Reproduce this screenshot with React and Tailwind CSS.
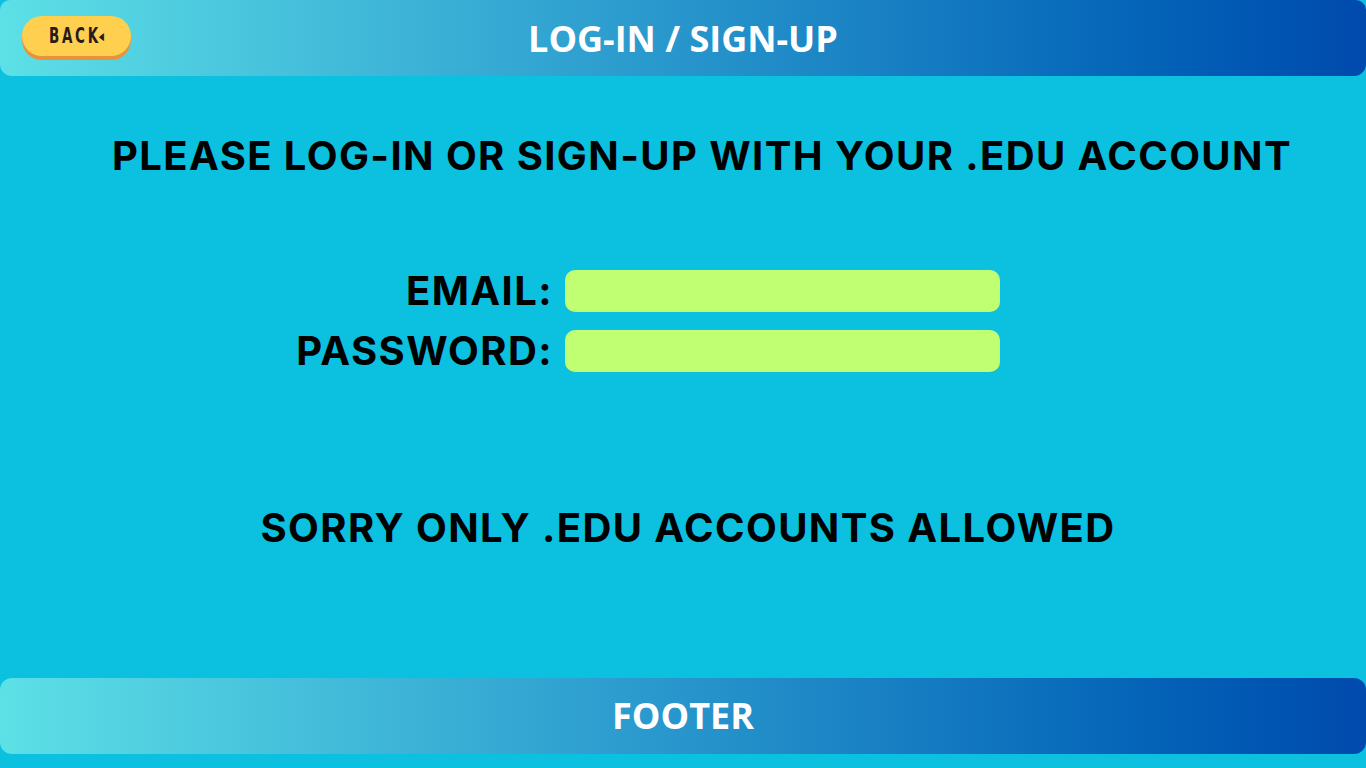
import React from 'react';

const App = () => {
  return (
    <div className="w-[1366px] h-[768px] bg-[#0cc0df] flex flex-col overflow-hidden font-['Inter',sans-serif]">
      {/* Header bar */}
      <div className="relative h-[76px] shrink-0 rounded-b-[12px] rounded-t-[10px] bg-gradient-to-r from-[#5de0e6] to-[#004aad] flex items-center justify-center">
        <button className="absolute left-[22px] top-[16px] h-[40px] w-[109px] rounded-full bg-[#ffcf50] shadow-[0_4px_0_#e8923a] flex items-center justify-center">
          <span className="text-[#2a1a1a] font-['DejaVu_Sans_Condensed',sans-serif] font-bold text-[22px] leading-none tracking-[4px] scale-x-[0.68] flex items-center">
            BACK<span className="text-[11px] tracking-normal -ml-[3px]">◀</span>
          </span>
        </button>
        <h1 className="text-white font-['Open_Sans',sans-serif] font-bold text-[36px] leading-none pt-[2px]">LOG-IN / SIGN-UP</h1>
      </div>

      {/* Main content */}
      <div className="flex-1 flex flex-col">
        <p className="mt-[60px] pl-[112px] text-black font-bold text-[40px] tracking-[1.4px] leading-none">
          PLEASE LOG-IN OR SIGN-UP WITH YOUR .EDU ACCOUNT
        </p>

        <div className="mt-[94px] grid grid-cols-[565px_435px] gap-y-[18px] items-center">
          <label className="text-right pr-[12px] text-black font-bold text-[40px] tracking-[1.4px] leading-none">EMAIL:</label>
          <div className="h-[42px] rounded-[10px] bg-[#c1ff72]" />
          <label className="text-right pr-[12px] text-black font-bold text-[40px] tracking-[1.4px] leading-none">PASSWORD:</label>
          <div className="h-[42px] rounded-[10px] bg-[#c1ff72]" />
        </div>

        <p className="mt-[136px] text-center pl-[10px] text-black font-bold text-[40px] tracking-[1.4px] leading-none">
          SORRY ONLY .EDU ACCOUNTS ALLOWED
        </p>
      </div>

      {/* Footer bar */}
      <div className="h-[76px] shrink-0 mb-[14px] rounded-[12px] bg-gradient-to-r from-[#5de0e6] to-[#004aad] flex items-center justify-center">
        <span className="text-white font-['Open_Sans',sans-serif] font-bold text-[36px] leading-none">FOOTER</span>
      </div>
    </div>
  );
};

export default App;
